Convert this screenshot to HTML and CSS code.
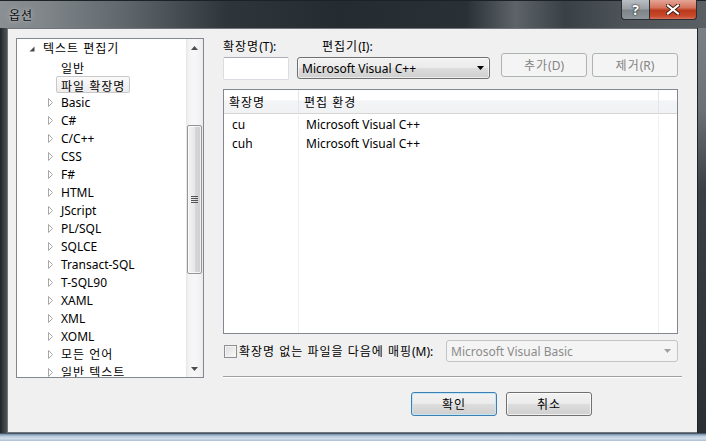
FILE: index.html
```html
<!DOCTYPE html>
<html lang="ko">
<head>
<meta charset="utf-8">
<title>옵션</title>
<link rel="stylesheet" href="styles.css">
</head>
<body>
<div class="window">
  <div class="titlebar">
    <span class="title ko">옵션</span>
    <div class="caption-btns">
      <div class="cap help">?</div>
      <div class="cap close">
        <svg width="14" height="11" viewBox="0 0 14 11"><path d="M2 1.5L12 9.5M12 1.5L2 9.5" stroke="#3b1a12" stroke-width="4" stroke-linecap="square"/><path d="M2 1.5L12 9.5M12 1.5L2 9.5" stroke="#fff" stroke-width="2.2" stroke-linecap="square"/></svg>
      </div>
    </div>
  </div>
  <div class="middle">
    <div class="frame-left"></div>
    <div class="client">
      <div class="tree">
        <div class="tree-items">
          <div class="row lvl0"><svg class="exp" width="6" height="6" viewBox="0 0 6 6"><path d="M5.5 0.5V5.5H0.5Z" fill="#4a4a4a"/></svg><span class="ko">텍스트 편집기</span></div>
          <div class="row lvl1"><span class="lbl ko">일반</span></div>
          <div class="row lvl1"><span class="lbl sel ko">파일 확장명</span></div>
          <div class="row lvlc"><svg class="col" width="6" height="9" viewBox="0 0 6 9"><path d="M0.5 0.5L4.5 4.5L0.5 8.5Z" fill="#fff" stroke="#a8a8a8"/></svg><span>Basic</span></div>
          <div class="row lvlc"><svg class="col" width="6" height="9" viewBox="0 0 6 9"><path d="M0.5 0.5L4.5 4.5L0.5 8.5Z" fill="#fff" stroke="#a8a8a8"/></svg><span>C#</span></div>
          <div class="row lvlc"><svg class="col" width="6" height="9" viewBox="0 0 6 9"><path d="M0.5 0.5L4.5 4.5L0.5 8.5Z" fill="#fff" stroke="#a8a8a8"/></svg><span>C/C++</span></div>
          <div class="row lvlc"><svg class="col" width="6" height="9" viewBox="0 0 6 9"><path d="M0.5 0.5L4.5 4.5L0.5 8.5Z" fill="#fff" stroke="#a8a8a8"/></svg><span>CSS</span></div>
          <div class="row lvlc"><svg class="col" width="6" height="9" viewBox="0 0 6 9"><path d="M0.5 0.5L4.5 4.5L0.5 8.5Z" fill="#fff" stroke="#a8a8a8"/></svg><span>F#</span></div>
          <div class="row lvlc"><svg class="col" width="6" height="9" viewBox="0 0 6 9"><path d="M0.5 0.5L4.5 4.5L0.5 8.5Z" fill="#fff" stroke="#a8a8a8"/></svg><span>HTML</span></div>
          <div class="row lvlc"><svg class="col" width="6" height="9" viewBox="0 0 6 9"><path d="M0.5 0.5L4.5 4.5L0.5 8.5Z" fill="#fff" stroke="#a8a8a8"/></svg><span>JScript</span></div>
          <div class="row lvlc"><svg class="col" width="6" height="9" viewBox="0 0 6 9"><path d="M0.5 0.5L4.5 4.5L0.5 8.5Z" fill="#fff" stroke="#a8a8a8"/></svg><span>PL/SQL</span></div>
          <div class="row lvlc"><svg class="col" width="6" height="9" viewBox="0 0 6 9"><path d="M0.5 0.5L4.5 4.5L0.5 8.5Z" fill="#fff" stroke="#a8a8a8"/></svg><span>SQLCE</span></div>
          <div class="row lvlc"><svg class="col" width="6" height="9" viewBox="0 0 6 9"><path d="M0.5 0.5L4.5 4.5L0.5 8.5Z" fill="#fff" stroke="#a8a8a8"/></svg><span>Transact-SQL</span></div>
          <div class="row lvlc"><svg class="col" width="6" height="9" viewBox="0 0 6 9"><path d="M0.5 0.5L4.5 4.5L0.5 8.5Z" fill="#fff" stroke="#a8a8a8"/></svg><span>T-SQL90</span></div>
          <div class="row lvlc"><svg class="col" width="6" height="9" viewBox="0 0 6 9"><path d="M0.5 0.5L4.5 4.5L0.5 8.5Z" fill="#fff" stroke="#a8a8a8"/></svg><span>XAML</span></div>
          <div class="row lvlc"><svg class="col" width="6" height="9" viewBox="0 0 6 9"><path d="M0.5 0.5L4.5 4.5L0.5 8.5Z" fill="#fff" stroke="#a8a8a8"/></svg><span>XML</span></div>
          <div class="row lvlc"><svg class="col" width="6" height="9" viewBox="0 0 6 9"><path d="M0.5 0.5L4.5 4.5L0.5 8.5Z" fill="#fff" stroke="#a8a8a8"/></svg><span>XOML</span></div>
          <div class="row lvlc"><svg class="col" width="6" height="9" viewBox="0 0 6 9"><path d="M0.5 0.5L4.5 4.5L0.5 8.5Z" fill="#fff" stroke="#a8a8a8"/></svg><span class="ko">모든 언어</span></div>
          <div class="row lvlc"><svg class="col" width="6" height="9" viewBox="0 0 6 9"><path d="M0.5 0.5L4.5 4.5L0.5 8.5Z" fill="#fff" stroke="#a8a8a8"/></svg><span class="ko">일반 텍스트</span></div>
        </div>
        <div class="vscroll">
          <div class="sb-btn"><svg width="7" height="4" viewBox="0 0 7 4"><path d="M3.5 0L7 4H0Z" fill="#4d4d4d"/></svg></div>
          <div class="sb-track">
            <div class="thumb">
              <svg width="7" height="7" viewBox="0 0 7 7"><path d="M0 0.5H7M0 2.5H7M0 4.5H7M0 6.5H7" stroke="#555" stroke-width="1"/></svg>
            </div>
          </div>
          <div class="sb-btn"><svg width="7" height="4" viewBox="0 0 7 4"><path d="M0 0H7L3.5 4Z" fill="#4d4d4d"/></svg></div>
        </div>
      </div>

      <div class="pane">
        <div class="top-row">
          <div class="field">
            <div class="label"><span class="ko">확장명</span>(T):</div>
            <div class="textbox"></div>
          </div>
          <div class="field">
            <div class="label label-editor"><span class="ko">편집기</span>(I):</div>
            <div class="combo">
              <span>Microsoft Visual C++</span>
              <svg width="7" height="4" viewBox="0 0 7 4"><path d="M0 0H7L3.5 4Z" fill="#000"/></svg>
            </div>
          </div>
          <div class="btn disabled btn-add"><span class="ko">추가</span>(D)</div>
          <div class="btn disabled btn-remove"><span class="ko">제거</span>(R)</div>
        </div>

        <div class="listview">
          <div class="lv-header">
            <div class="lv-col c1 ko">확장명</div>
            <div class="lv-col c2 ko">편집 환경</div>
            <div class="lv-col c3"></div>
          </div>
          <div class="lv-body">
            <div class="lv-row"><div class="lv-cell c1">cu</div><div class="lv-cell c2">Microsoft Visual C++</div><div class="lv-cell c3"></div></div>
            <div class="lv-row"><div class="lv-cell c1">cuh</div><div class="lv-cell c2">Microsoft Visual C++</div><div class="lv-cell c3"></div></div>
            <div class="lv-row fill"><div class="lv-cell c1"></div><div class="lv-cell c2"></div><div class="lv-cell c3"></div></div>
          </div>
        </div>

        <div class="map-row">
          <div class="checkbox"></div>
          <span class="map-label"><span class="ko">확장명 없는 파일을 다음에 매핑</span>(M):</span>
          <div class="combo combo-disabled">
            <span>Microsoft Visual Basic</span>
            <svg width="7" height="4" viewBox="0 0 7 4"><path d="M0 0H7L3.5 4Z" fill="#a0a0a0"/></svg>
          </div>
        </div>

        <div class="separator"></div>

        <div class="dlg-buttons">
          <div class="btn default ko">확인</div>
          <div class="btn ko">취소</div>
        </div>
      </div>
    </div>
    <div class="frame-right"></div>
  </div>
  <div class="frame-bottom"></div>
</div>
</body>
</html>
```

FILE: styles.css
```css
* { box-sizing: border-box; }
html, body { margin: 0; padding: 0; }
body {
  width: 706px;
  height: 441px;
  overflow: hidden;
  font-family: "Noto Sans", "Noto Sans CJK KR", sans-serif;
  font-size: 12px;
  line-height: 16px;
  color: #000;
  background: #2c3237;
}
.ko { letter-spacing: 1px; }

.window {
  width: 706px;
  height: 441px;
  display: flex;
  flex-direction: column;
}

/* Title bar */
.titlebar {
  height: 28px;
  display: flex;
  justify-content: space-between;
  align-items: flex-start;
  background: linear-gradient(90deg, #8a8f93 0%, #80868a 6%, #5f666b 18%, #2f363b 32%, #252c31 48%, #2a3136 66%, #5d6368 73%, #3a4146 80%, #4c5257 88%, #5a5f63 100%);
  border-top: 1px solid #1d2226;
}
.title {
  margin: 7px 0 0 9px;
  color: #0a0a0a;
  text-shadow: 0 0 6px rgba(220, 225, 230, 0.7), 0 0 2px rgba(220, 225, 230, 0.6);
}
.caption-btns {
  display: flex;
  margin-right: 9px;
  margin-top: -1px;
}
.cap {
  height: 20px;
  display: flex;
  align-items: center;
  justify-content: center;
  border: 1px solid #2a2e31;
  border-top: none;
}
.help {
  width: 28px;
  border-radius: 0 0 0 4px;
  border-right: none;
  background: linear-gradient(180deg, #b9bec2 0%, #9aa0a5 45%, #7d858b 55%, #8e969c 100%);
  color: #fff;
  font-weight: bold;
  font-size: 14px;
  text-shadow: 0 0 2px #222, 0 0 1px #000;
}
.close {
  width: 48px;
  border-radius: 0 0 4px 0;
  background: linear-gradient(180deg, #e4a597 0%, #d5735d 40%, #bc3a1c 55%, #c9482b 85%, #d7705a 100%);
}

/* Middle area */
.middle {
  display: flex;
  height: 405px;
}
.frame-left {
  width: 7px;
  background: linear-gradient(90deg, #1f2428 0, #3d4347 60%, #4b5155 100%);
}
.frame-right {
  width: 9px;
  background: linear-gradient(180deg, #7a8085 0%, #6b7176 20%, #3a4045 40%, #2a3034 100%);
  border-left: 1px solid #1f2428;
}
.client {
  width: 690px;
  background: #f0f0f0;
  border: 1px solid #70767b;
  border-right: none;
  padding: 9px 0 0 8px;
  display: flex;
  align-items: flex-start;
}

/* Tree */
.tree {
  width: 188px;
  height: 340px;
  border: 1px solid #828790;
  background: #fff;
  display: flex;
  overflow: hidden;
}
.tree-items {
  width: 169px;
  height: 338px;
  overflow: hidden;
}
.row {
  height: 18px;
  padding-top: 2px;
  display: flex;
  align-items: center;
  white-space: nowrap;
}
.lvl0 { padding-left: 12px; }
.lvl0 .exp { margin-right: 8px; margin-top: -1px; }
.lvl1 { padding-left: 39px; }
.lbl {
  padding: 0 4px;
  border: 1px solid transparent;
  border-radius: 2px;
  height: 17px;
  line-height: 17px;
  margin-top: -2px;
  padding-top: 1px;
}
.lbl.sel {
  border-color: #c8c8c8;
  background: linear-gradient(180deg, #fafafa 0%, #ececec 100%);
}
.lvlc { padding-left: 31px; }
.lvlc .col { margin-right: 7px; margin-top: -1px; }

.vscroll {
  width: 17px;
  height: 338px;
  display: flex;
  flex-direction: column;
  background: linear-gradient(90deg, #e6e6e6 0, #f3f3f3 15%, #f7f7f7 50%, #f1f1f1 85%, #e9e9e9 100%);
}
.sb-btn {
  height: 17px;
  display: flex;
  align-items: center;
  justify-content: center;
}
.sb-track {
  flex: 1;
  padding: 69px 1px 0 1px;
}
.thumb {
  height: 149px;
  border: 1px solid #959595;
  border-radius: 2px;
  background: linear-gradient(90deg, #f3f3f3 0%, #e8e8e8 50%, #d7d7d7 51%, #cfcfcf 100%);
  box-shadow: inset 0 0 0 1px rgba(255,255,255,0.7);
  display: flex;
  align-items: center;
  justify-content: center;
}

/* Right pane */
.pane {
  width: 459px;
  margin-left: 19px;
  display: flex;
  flex-direction: column;
}
.top-row {
  display: flex;
  align-items: flex-start;
  width: 455px;
}
.field { display: flex; flex-direction: column; }
.label {
  height: 17px;
  padding-top: 1px;
  margin-bottom: 2px;
  white-space: nowrap;
}
.label-editor { margin-left: 25px; }
.textbox {
  width: 66px;
  height: 23px;
  background: #fff;
  border: 1px solid #dadee4;
  border-top-color: #abadb3;
  border-radius: 2px;
}
.field + .field { margin-left: 8px; }
.combo {
  width: 193px;
  height: 22px;
  border: 1px solid #707070;
  border-radius: 3px;
  background: linear-gradient(180deg, #f2f2f2 0%, #ebebeb 50%, #dddddd 51%, #cfcfcf 100%);
  box-shadow: inset 0 0 0 1px rgba(255,255,255,0.6);
  display: flex;
  align-items: center;
  justify-content: space-between;
  padding: 1px 5px 0 4px;
  white-space: nowrap;
}
.combo svg { margin-top: -1px; }
.btn {
  width: 86px;
  height: 24px;
  padding-top: 1px;
  border: 1px solid #707070;
  border-radius: 3px;
  background: linear-gradient(180deg, #f2f2f2 0%, #ebebeb 50%, #dddddd 51%, #cfcfcf 100%);
  box-shadow: inset 0 0 0 1px rgba(255,255,255,0.7);
  display: flex;
  align-items: center;
  justify-content: center;
  white-space: nowrap;
}
.btn-add { margin-top: 15px; margin-left: 11px; }
.btn-remove { margin-top: 15px; margin-left: 5px; }
.btn.disabled {
  border-color: #adb2b5;
  background: #f4f4f4;
  box-shadow: none;
  color: #838383;
}
.btn.default {
  border-color: #3c7fb1;
  box-shadow: inset 0 0 0 1px #c4e5f6;
}

/* List view */
.listview {
  margin-top: 9px;
  width: 455px;
  height: 245px;
  border: 1px solid #828790;
  background: #fff;
  display: flex;
  flex-direction: column;
}
.lv-header {
  height: 24px;
  display: flex;
  border-bottom: 1px solid #d5d5d5;
  background: linear-gradient(180deg, #ffffff 0%, #ffffff 45%, #f3f4f6 46%, #f1f2f4 100%);
}
.lv-col {
  height: 23px;
  line-height: 20px;
  padding-top: 3px;
  padding-left: 5px;
  border-right: 1px solid #e3e5e8;
  white-space: nowrap;
}
.c1 { width: 75px; }
.c2 { width: 360px; }
.c3 { flex: 1; border-right: none; }
.lv-body {
  flex: 1;
  display: flex;
  flex-direction: column;
}
.lv-row { display: flex; height: 18px; }
.lv-row:first-child { height: 20px; padding-top: 2px; }
.lv-row:nth-child(2) { padding-top: 1px; }
.lv-row.fill { flex: 1; }
.lv-cell {
  border-right: 1px solid #f0f0f0;
  white-space: nowrap;
  line-height: 18px;
}
.lv-cell.c1 { padding-left: 8px; }
.lv-cell.c2 { padding-left: 7px; }
.lv-cell.c3 { border-right: none; }

/* Mapping row */
.map-row {
  margin-top: 6px;
  height: 22px;
  width: 455px;
  display: flex;
  align-items: center;
}
.checkbox {
  width: 13px;
  height: 13px;
  border: 1px solid #8e8f8f;
  background: linear-gradient(135deg, #dcdcdc 0%, #eeeeee 60%, #fbfbfb 100%);
  box-shadow: inset 0 0 0 1px #f4f4f4;
  margin-left: 1px;
  margin-top: 1px;
}
.map-label {
  margin-left: 2px;
  padding-top: 2px;
  white-space: nowrap;
}
.combo-disabled {
  margin-left: auto;
  width: 232px;
  height: 22px;
  border-color: #c2c4c6;
  background: #f4f4f4;
  box-shadow: none;
  color: #8b8b8b;
  padding-right: 6px;
}

.separator {
  margin-top: 14px;
  width: 459px;
  height: 2px;
  border-top: 1px solid #a0a0a0;
  border-bottom: 1px solid #ffffff;
}

.dlg-buttons {
  margin-top: 14px;
  display: flex;
  justify-content: flex-end;
  padding-right: 90px;
}
.dlg-buttons .btn + .btn { margin-left: 9px; }

/* Bottom frame */
.frame-bottom {
  height: 8px;
  background: linear-gradient(180deg, #1f2428 0, #6f8aa6 12%, #b9cbdd 40%, #d2dee9 70%, #a9bccf 100%);
}
```
